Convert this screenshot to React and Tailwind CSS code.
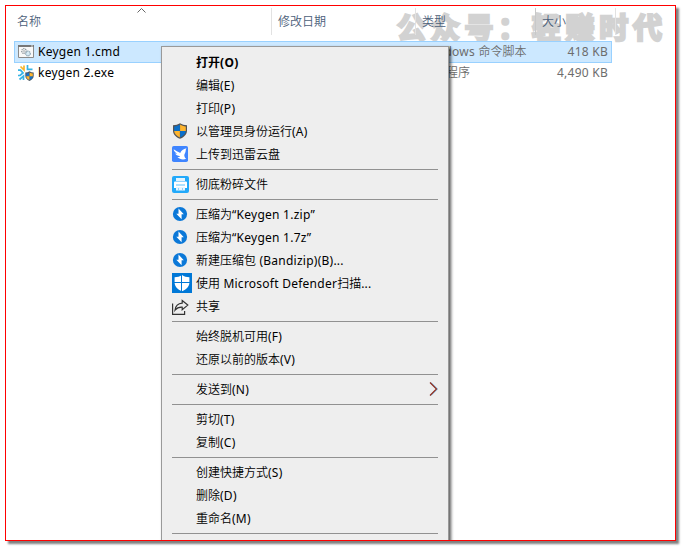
const SANS = "font-['Noto_Sans','Noto_Sans_CJK_SC',sans-serif]";

// Latin runs are set slightly looser than the Chinese characters around them.
function Mixed({ text, bold }) {
  return text.split(/([\u4e00-\u9fff]+)/).map((part, i) =>
    i % 2 ? part : <span key={i} className={bold ? 'tracking-[0.3px]' : 'font-normal tracking-[0.25px]'}>{part}</span>
  );
}

function Shield() {
  return (
    <svg className="-mt-0.5" width="16" height="16" viewBox="0 0 16 16">
      <path d="M8 .3C6 1.600 3.700 2.300 1 2.300v5.200C1 11.500 4 14.200 8 15.800c4-1.600 7-4.300 7-8.300V2.300C12.300 2.300 10 1.600 8 .3z" fill="#545454" />
      <path d="M7.900 1.600v6.300H2.200V3.400c2.200-.1 4.100-.7 5.700-1.800z" fill="#0a6fc9" />
      <path d="M8.100 1.600c1.600 1.100 3.500 1.700 5.700 1.800v4.500H8.100z" fill="#ffb52e" />
      <path d="M2.200 8h5.700v6.500C4.600 13 2.400 10.900 2.200 8z" fill="#ffb52e" />
      <path d="M13.800 8H8.100v6.500c3.300-1.500 5.500-3.600 5.700-6.500z" fill="#0a6fc9" />
    </svg>
  );
}

function Bird() {
  return (
    <svg className="-mt-0.5" width="16" height="16" viewBox="0 0 16 16">
      <rect width="16" height="16" rx="1.800" fill="#3f85ff" />
      <path d="M1.600 3.200c2.200 1.500 4.200 2.300 6.600 3.700C9.300 4.500 11.200 3 14.500 2.200c-1.100 1.500-.5 2.800-1.300 4.500-.5 1.200-.9 1.600-.9 2.700.2 1.600.8 2.500 1.900 3.400-2.800 1.300-6.500.8-8.800-1.700 1.200 0 2-.2 2.700-.9C5.500 9.900 3.900 8.900 3.200 7.600c.7.200 1.300.2 1.900 0C3.300 6.500 2 5.200 1.600 3.200z" fill="#fff" />
    </svg>
  );
}

function Shredder() {
  return (
    <svg width="17" height="17" viewBox="0 0 17 17">
      <rect width="17" height="17" rx="2" fill="#22a9fa" />
      <path d="M4 2h9v3H4z" fill="#e2f4ff" />
      <path d="M3 5.500h11a1 1 0 0 1 1 1V12H2V6.500a1 1 0 0 1 1-1z" fill="#fff" />
      <path d="M4 9h9" stroke="#5cc2fc" />
      <path d="M4 11h9v3.500H4z" fill="#e8f6ff" />
      <path d="M6.500 12v2.500M10.500 12v2.500" stroke="#8dd3fc" />
    </svg>
  );
}

function Bandizip() {
  return (
    <svg className="-mt-0.5" width="16" height="16" viewBox="0 0 16 16">
      <circle cx="8" cy="8" r="7.100" fill="#0b78d8" />
      <path d="M6.500 2.500l5.300 5.800H9.600v4.900L4.300 7.800h2.200z" fill="#fff" />
    </svg>
  );
}

function Defender() {
  return (
    <svg className="-mt-px" width="20" height="20" viewBox="0 0 20 20">
      <rect width="20" height="20" fill="#0078d7" />
      <path d="M10 2C7.900 3.500 5.400 4.200 2.600 4.300v5.100C2.600 13.500 5.600 16.300 10 18.200c4.400-1.900 7.400-4.700 7.400-8.800V4.300C14.600 4.200 12.100 3.500 10 2z" fill="#fff" />
      <path d="M9.500 1v18M2 9.500h16" stroke="#0078d7" />
    </svg>
  );
}

function Share() {
  return (
    <svg width="17" height="16" viewBox="0 0 17 16" fill="none" stroke="#333" strokeWidth="1.200">
      <path d="M.6 4.500v10.900h12V12" />
      <path d="M10.200 1.500l5.600 4.600-5.600 4.600V8.200C7.200 8 5 8.800 3 11.200 3.500 7 6 4.400 10.200 4.100z" />
    </svg>
  );
}

function CmdFile() {
  return (
    <svg className="-mt-px" width="16" height="13" viewBox="0 0 16 13">
      <path d="M.5.500h15v12H.5z" fill="#f8f8f8" stroke="#8a8a8a" />
      <path d="M0 0h16v2H0z" fill="#777" />
      <path d="M13 .5h2v1h-2z" fill="#ddd" />
      <circle cx="6" cy="6" r="2.300" fill="none" stroke="#8d969c" strokeWidth="1.300" strokeDasharray="1.200 .6" />
      <circle cx="6" cy="6" r=".8" fill="#8d969c" />
      <circle cx="10" cy="8.500" r="2.300" fill="#d8ebf5" stroke="#8aa5b5" strokeWidth="1.300" strokeDasharray="1.200 .6" />
    </svg>
  );
}

function ExeFile() {
  return (
    <svg className="-mt-px" width="16" height="16" viewBox="0 0 16 16">
      <g fill="none" strokeWidth="1.700">
        <path d="M2.500 1.500L6 5V.5" stroke="#f7b52c" />
        <path d="M9.500 0v4.300H14.500" stroke="#36b4e5" />
        <path d="M0 5.200h2.500L5 8l-3 2.500H0" stroke="#36b4e5" />
        <path d="M1.500 14.500L5.500 11v4" stroke="#36b4e5" />
      </g>
      <path d="M11.500 6.300c-1.300.8-2.600 1.200-4.200 1.200v3.300c0 2.400 1.700 4.200 4.200 5.100 2.500-.9 4.200-2.700 4.200-5.100V7.500c-1.600 0-2.900-.4-4.200-1.200z" fill="#4c5963" />
      <path d="M11.400 7.500v3.800H8.200V8.500c1.200-.1 2.200-.4 3.200-1zM11.600 11.300h3.200c-.1 1.700-1.300 3-3.200 3.700z" fill="#1672ca" />
      <path d="M11.600 7.500v3.800h3.200V8.500c-1.200-.1-2.200-.4-3.200-1zM11.400 11.300H8.200c.1 1.700 1.300 3 3.200 3.700z" fill="#ffb52e" />
    </svg>
  );
}

const menu = [
  { text: '打开(O)', bold: true },
  { text: '编辑(E)' },
  { text: '打印(P)' },
  { text: '以管理员身份运行(A)', icon: <Shield /> },
  { text: '上传到迅雷云盘', icon: <Bird /> },
  null,
  { text: '彻底粉碎文件', icon: <Shredder /> },
  null,
  { text: '压缩为“Keygen 1.zip”', icon: <Bandizip /> },
  { text: '压缩为“Keygen 1.7z”', icon: <Bandizip /> },
  { text: '新建压缩包 (Bandizip)(B)...', icon: <Bandizip /> },
  { text: '使用 Microsoft Defender扫描...', icon: <Defender /> },
  { text: '共享', icon: <Share /> },
  null,
  { text: '始终脱机可用(F)' },
  { text: '还原以前的版本(V)' },
  null,
  { text: '发送到(N)', sub: true },
  null,
  { text: '剪切(T)' },
  { text: '复制(C)' },
  null,
  { text: '创建快捷方式(S)' },
  { text: '删除(D)' },
  { text: '重命名(M)' },
  null,
];

function ContextMenu() {
  return (
    <div className="absolute left-[155px] top-[40px] h-[520px] w-[288px] border border-[#999] bg-[#eee] pt-1 shadow-[2px_2px_3px_rgba(0,0,0,0.65)]">
      {menu.map((m, i) =>
        m ? (
          <div key={i} className="flex h-[23px] items-center text-black">
            <span className="ml-[10px] flex w-6 shrink-0 items-center">{m.icon}</span>
            <span className={m.bold ? 'grow font-bold' : 'grow font-[350]'}><Mixed text={m.text} bold={m.bold} /></span>
            {m.sub && (
              <svg className="-mt-0.5 mr-[10px]" width="9" height="14" viewBox="0 0 9 14" fill="none">
                <path d="M2 .5L8.500 7 2 13.500" stroke="#62b5f0" />
                <path d="M1 .5L7.500 7 1 13.500" stroke="#8c2a1c" strokeWidth="1.200" />
              </svg>
            )}
          </div>
        ) : (
          <div key={i} className="h-[7px] pt-[3px]">
            <div className="mx-[10px] h-px bg-[#919191]" />
          </div>
        )
      )}
    </div>
  );
}

function FileRow({ icon, name, type, size, selected }) {
  return (
    <div className={selected
      ? 'flex h-[22px] w-[598px] items-center border border-[#99d1ff] bg-[#cce8ff]'
      : 'flex h-[20px] w-[598px] items-center border-x border-transparent'}>
      <span className="ml-[3px] flex w-5 items-center">{icon}</span>
      <span className="w-[384px] text-black"><Mixed text={name} /></span>
      <span className="w-[130px] whitespace-nowrap font-[350] text-[#6d6d6d]"><Mixed text={type} /></span>
      <span className="grow pr-[3px] text-right tracking-[0.25px] text-[#6d6d6d]">{size}</span>
    </div>
  );
}

export default function App() {
  return (
    <div className={`h-[547px] w-[682px] overflow-hidden bg-white pl-[5px] pt-[5px] text-[12px] leading-[16px] ${SANS}`}>
      <div className="relative h-[536px] w-[671px] border border-[#f00] bg-white shadow-[3px_3px_2px_rgba(0,0,0,0.5)]">
        <div className="relative h-full w-full overflow-hidden">
          <div className="absolute left-[391px] top-[3px] whitespace-nowrap font-['Noto_Sans_CJK_SC',sans-serif] text-[29px] font-bold leading-[34px] tracking-[4.700px] text-[#d2d2d2] [-webkit-text-stroke:2.500px_#d2d2d2] [stroke-linejoin:round]">
            公众号：轻赚时代
          </div>
          <div className="relative flex h-[35px] pt-[2px] font-[350] text-[#4c607a]">
            <div className="relative h-[27px] w-[266px] border-r border-[#e2e2e2] pl-[11px] pt-[6px]">
              名称
              <svg className="absolute left-[131px] top-0" width="9" height="6" viewBox="0 0 9 6" fill="none" stroke="#666">
                <path d="M.5 4.500l4-4 4 4" />
              </svg>
            </div>
            <div className="h-[27px] w-[144px] border-r border-[#e2e2e2] pl-[6px] pt-[6px]">修改日期</div>
            <div className="h-[27px] w-[120px] border-r border-[#c8c8c8] pl-[6px] pt-[6px]">类型</div>
            <div className="h-[27px] w-[80px] border-r border-[#e2e2e2] pl-[6px] pt-[6px]">大小</div>
          </div>
          <div className="relative pl-2">
            <FileRow selected icon={<CmdFile />} name="Keygen 1.cmd" type="Windows 命令脚本" size="418 KB" />
            <FileRow icon={<ExeFile />} name="keygen 2.exe" type="应用程序" size="4,490 KB" />
          </div>
          <ContextMenu />
        </div>
      </div>
    </div>
  );
}
